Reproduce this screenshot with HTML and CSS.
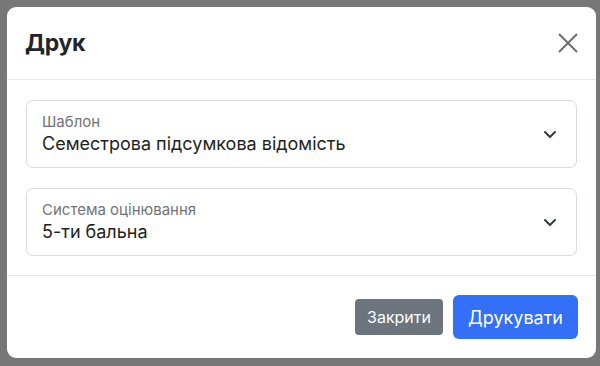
FILE: index.html
```html
<!DOCTYPE html>
<html lang="uk">
<head>
    <meta charset="UTF-8">
    <meta name="viewport" content="width=device-width, initial-scale=1.0">
    <title>Друк</title>
    <link rel="stylesheet" href="styles.css">
</head>
<body>
    <!-- Print dialog -->
    <div class="backdrop">
        <div class="modal">
            <div class="modal-header">
                <h2 class="modal-title">Друк</h2>
                <button class="close-btn" aria-label="Закрити">
                    <svg width="22" height="22" viewBox="0 0 22 22">
                        <path d="M2 2 L20 20 M20 2 L2 20" stroke="#6c6c6c" stroke-width="2" fill="none"/>
                    </svg>
                </button>
            </div>

            <div class="modal-body">
                <div class="floating-select">
                    <span class="select-label">Шаблон</span>
                    <span class="select-value">Семестрова підсумкова відомість</span>
                    <svg class="chevron" width="16" height="16" viewBox="0 0 16 16">
                        <path d="M3 6 L8 11 L13 6" stroke="#343a40" stroke-width="2" fill="none" stroke-linecap="round" stroke-linejoin="round"/>
                    </svg>
                </div>

                <div class="floating-select">
                    <span class="select-label">Система оцінювання</span>
                    <span class="select-value">5-ти бальна</span>
                    <svg class="chevron" width="16" height="16" viewBox="0 0 16 16">
                        <path d="M3 6 L8 11 L13 6" stroke="#343a40" stroke-width="2" fill="none" stroke-linecap="round" stroke-linejoin="round"/>
                    </svg>
                </div>
            </div>

            <div class="modal-footer">
                <button class="btn btn-secondary">Закрити</button>
                <button class="btn btn-primary">Друкувати</button>
            </div>
        </div>
    </div>
</body>
</html>
```

FILE: styles.css
```css
body {
    margin: 0;
    font-family: Inter, "Noto Sans", sans-serif;
    color: #212529;
    background-color: #777;
}

.backdrop {
    height: 366px;
    padding: 7px 4px 8px 7px;
    box-sizing: border-box;
}

.modal {
    height: 351px;
    width: 589px;
    background: white;
    border-radius: 9px;
    display: flex;
    flex-direction: column;
}

.modal-header {
    height: 72px;
    padding: 0 17px 0 18px;
    display: flex;
    justify-content: space-between;
    align-items: center;
    border-bottom: 1px solid #e6e6ee;
}

.modal-title {
    margin: 0;
    font-size: 23px;
    font-weight: 700;
    letter-spacing: -0.3px;
}

.close-btn {
    border: none;
    background: none;
    padding: 0;
    width: 22px;
    height: 22px;
    cursor: pointer;
}

.modal-body {
    padding: 20px 19px 19px 19px;
    display: flex;
    flex-direction: column;
    gap: 20px;
    border-bottom: 1px solid #e6e6ee;
}

.floating-select {
    position: relative;
    height: 66px;
    border: 1px solid #d8dce2;
    border-radius: 7px;
    padding: 0 15px;
    display: flex;
    flex-direction: column;
    justify-content: center;
}

.select-label {
    font-size: 15px;
    color: #707478;
    margin-bottom: 2px;
    margin-top: -2px;
}

.select-value {
    font-size: 18px;
    color: #1d1f21;
}

.chevron {
    position: absolute;
    right: 18px;
    top: 25px;
}

.modal-footer {
    flex: 1;
    padding: 0 18px;
    display: flex;
    justify-content: flex-end;
    align-items: center;
    gap: 10px;
}

.btn {
    border: none;
    color: white;
    font-family: inherit;
    cursor: pointer;
}

.btn-secondary {
    background-color: #6c757d;
    height: 36px;
    width: 88px;
    font-size: 16px;
    border-radius: 4px;
}

.btn-primary {
    background-color: #3370f5;
    height: 44px;
    width: 125px;
    font-size: 18px;
    border-radius: 6px;
}
```
